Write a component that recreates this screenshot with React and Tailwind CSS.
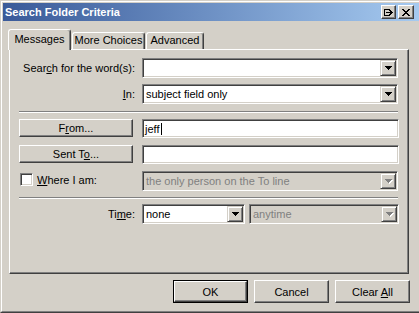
import React from "react";

const RAISED =
  "border border-t-white border-l-white border-r-[#404040] border-b-[#404040] shadow-[inset_-1px_-1px_0_#808080]";
const SUNKEN =
  "border border-t-[#808080] border-l-[#808080] border-r-white border-b-white shadow-[inset_1px_1px_0_#404040,inset_-1px_-1px_0_#d4d0c8]";

function U({ children }) {
  return <span className="underline decoration-1 underline-offset-[1px]">{children}</span>;
}

function Arrow({ disabled }) {
  const fill = disabled ? "#808080" : "#000000";
  return (
    <svg width="8" height="5" viewBox="0 0 8 5" shapeRendering="crispEdges">
      {disabled && (
        <g fill="#ffffff">
          <rect x="1" y="1" width="7" height="1" />
          <rect x="2" y="2" width="5" height="1" />
          <rect x="3" y="3" width="3" height="1" />
          <rect x="4" y="4" width="1" height="1" />
        </g>
      )}
      <g fill={fill}>
        <rect x="0" y="0" width="7" height="1" />
        <rect x="1" y="1" width="5" height="1" />
        <rect x="2" y="2" width="3" height="1" />
        <rect x="3" y="3" width="1" height="1" />
      </g>
    </svg>
  );
}

function DropBtn({ disabled }) {
  return (
    <div className="w-[16px] h-[16px] m-px flex items-center justify-center pl-[1px] bg-[#d4d0c8] border border-t-[#d4d0c8] border-l-[#d4d0c8] border-r-[#404040] border-b-[#404040] shadow-[inset_1px_1px_0_#ffffff,inset_-1px_-1px_0_#808080]">
      <Arrow disabled={disabled} />
    </div>
  );
}

function Combo({ w, value, disabled }) {
  return (
    <div
      className={`${w} h-[20px] flex ${SUNKEN} ${
        disabled ? "bg-[#d4d0c8] text-[#808080]" : "bg-white text-black"
      }`}
    >
      <div className="flex-1 pl-[3px] pt-[3px] leading-[13px] whitespace-nowrap overflow-hidden">
        {value}
      </div>
      <DropBtn disabled={disabled} />
    </div>
  );
}

function TextBox({ children }) {
  return (
    <div className={`w-[257px] h-[19px] bg-white ${SUNKEN} pl-[2px] pt-[3px] leading-[13px] flex items-start`}>
      {children}
    </div>
  );
}

function Btn({ w, h, children, isDefault }) {
  const inner = (
    <div className={`w-full h-full flex items-center justify-center ${RAISED} leading-[13px]`}>
      <span className="pt-[1px]">{children}</span>
    </div>
  );
  if (isDefault) {
    return <div className={`${w} ${h} border border-black`}>{inner}</div>;
  }
  return <div className={`${w} ${h}`}>{inner}</div>;
}

function Label({ children }) {
  return (
    <div className="w-[116px] text-right pt-[4px] leading-[13px] whitespace-nowrap">{children}</div>
  );
}

function Separator() {
  return <div className="h-[2px] border-t border-t-[#808080] border-b border-b-white w-[379px]" />;
}

function HelpIcon() {
  return (
    <svg width="9" height="7" viewBox="0 0 9 7" shapeRendering="crispEdges" fill="#000">
      <rect x="0" y="0" width="6" height="1" />
      <rect x="0" y="6" width="6" height="1" />
      <rect x="0" y="0" width="1" height="7" />
      <rect x="5" y="0" width="1" height="2" />
      <rect x="5" y="5" width="1" height="2" />
      <rect x="2" y="3" width="5" height="1" />
      <rect x="6" y="1" width="1" height="5" />
      <rect x="7" y="2" width="1" height="3" />
      <rect x="8" y="3" width="1" height="1" />
    </svg>
  );
}

function CloseIcon() {
  return (
    <svg width="8" height="7" viewBox="0 0 8 7" shapeRendering="crispEdges" fill="#000">
      <rect x="0" y="0" width="2" height="1" />
      <rect x="6" y="0" width="2" height="1" />
      <rect x="1" y="1" width="2" height="1" />
      <rect x="5" y="1" width="2" height="1" />
      <rect x="2" y="2" width="4" height="1" />
      <rect x="3" y="3" width="2" height="1" />
      <rect x="2" y="4" width="4" height="1" />
      <rect x="1" y="5" width="2" height="1" />
      <rect x="5" y="5" width="2" height="1" />
      <rect x="0" y="6" width="2" height="1" />
      <rect x="6" y="6" width="2" height="1" />
    </svg>
  );
}

function CaptionBtn({ w, children }) {
  return (
    <div
      className={`${w} h-[14px] flex items-center justify-center bg-[#d4d0c8] border border-t-white border-l-white border-r-[#404040] border-b-[#404040] shadow-[inset_-1px_-1px_0_#808080]`}
    >
      {children}
    </div>
  );
}

export default function App() {
  return (
    <div className="w-[419px] h-[313px] bg-[#d4d0c8] font-['Liberation_Sans',Arial,sans-serif] text-[11px] text-black overflow-hidden border-t border-l border-b border-t-[#d4d0c8] border-l-[#d4d0c8] border-b-[#404040]">
      <div className="h-full border-t border-l border-b border-t-white border-l-white border-b-[#808080] pt-px pl-px">
        {/* Title bar */}
        <div className="h-[18px] flex items-center bg-linear-to-r from-[#3a5a99] to-[#a6caf0] pl-[2px] pr-[5px]">
          <div className="flex-1 font-bold text-white leading-[18px] whitespace-nowrap">
            Search Folder Criteria
          </div>
          <CaptionBtn w="w-[15px]">
            <HelpIcon />
          </CaptionBtn>
          <div className="w-[2px]" />
          <CaptionBtn w="w-[16px]">
            <CloseIcon />
          </CaptionBtn>
        </div>

        {/* Tabs */}
        <div className="flex items-end h-[20px] mt-[8px] ml-[5px]">
          <div className="relative z-10 w-[63px] h-[21px] -mb-px bg-[#d4d0c8] rounded-t-[3px] border-t border-l border-r border-t-white border-l-white border-r-[#404040] shadow-[inset_-1px_0_0_#808080] text-center pt-[3px] leading-[13px]">
            Messages
          </div>
          <div className="ml-px w-[73px] h-[17px] rounded-t-[3px] border-t border-l border-r border-t-white border-l-white border-r-[#404040] shadow-[inset_-1px_0_0_#808080] text-center pt-[1px] leading-[13px]">
            More Choices
          </div>
          <div className="ml-px w-[58px] h-[17px] rounded-t-[3px] border-t border-l border-r border-t-white border-l-white border-r-[#404040] shadow-[inset_-1px_0_0_#808080] text-center pt-[1px] leading-[13px]">
            Advanced
          </div>
        </div>

        {/* Panel */}
        <div className={`ml-[6px] w-[400px] h-[225px] ${RAISED} px-[9px] pt-[8px] flex flex-col`}>
          <div className="flex h-[20px]">
            <Label>
              Sear<U>c</U>h for the word(s):
            </Label>
            <div className="ml-[7px]">
              <Combo w="w-[256px]" value="" />
            </div>
          </div>
          <div className="flex h-[20px] mt-[6px]">
            <Label>
              <U>I</U>n:
            </Label>
            <div className="ml-[7px]">
              <Combo w="w-[256px]" value="subject field only" />
            </div>
          </div>
          <div className="mt-[7px]">
            <Separator />
          </div>
          <div className="flex h-[19px] mt-[6px]">
            <Btn w="w-[114px]" h="h-[18px]">
              F<U>r</U>om...
            </Btn>
            <div className="ml-[9px]">
              <TextBox>
                <span>jeff</span>
                <span className="ml-[2px] w-px h-[12px] bg-black" />
              </TextBox>
            </div>
          </div>
          <div className="flex h-[19px] mt-[7px]">
            <Btn w="w-[114px]" h="h-[18px]">
              Sent T<U>o</U>...
            </Btn>
            <div className="ml-[9px]">
              <TextBox />
            </div>
          </div>
          <div className="flex h-[20px] mt-[7px]">
            <div className="w-[114px] flex items-start pt-[2px]">
              <div className={`ml-[1px] w-[13px] h-[13px] bg-white ${SUNKEN}`} />
              <div className="ml-[4px] leading-[13px] pt-[1px]">
                <U>W</U>here I am:
              </div>
            </div>
            <div className="ml-[9px]">
              <Combo w="w-[256px]" value="the only person on the To line" disabled />
            </div>
          </div>
          <div className="mt-[6px]">
            <Separator />
          </div>
          <div className="flex h-[20px] mt-[5px]">
            <Label>
              Ti<U>m</U>e:
            </Label>
            <div className="ml-[7px] flex">
              <Combo w="w-[103px]" value="none" />
              <div className="ml-[4px]">
                <Combo w="w-[150px]" value="anytime" disabled />
              </div>
            </div>
          </div>
        </div>

        {/* Bottom buttons */}
        <div className="flex justify-end mt-[6px] pr-[9px] gap-[6px]">
          <Btn w="w-[75px]" h="h-[23px]" isDefault>
            OK
          </Btn>
          <Btn w="w-[75px]" h="h-[23px]">
            Cancel
          </Btn>
          <Btn w="w-[75px]" h="h-[23px]">
            Clear <U>A</U>ll
          </Btn>
        </div>
      </div>
    </div>
  );
}
